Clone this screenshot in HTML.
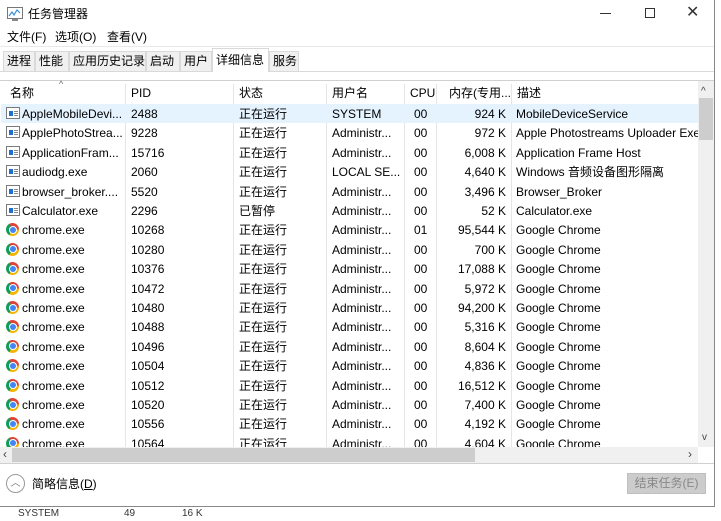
<!DOCTYPE html><html><head><meta charset="utf-8"><style>
*{margin:0;padding:0;box-sizing:border-box}
body{width:721px;height:514px;background:#fff;font-family:"Liberation Sans","Noto Sans CJK SC",sans-serif;font-size:12px;color:#000;position:relative;overflow:hidden;line-height:15px}
.a{position:absolute;white-space:nowrap;line-height:15px}
.tab{position:absolute;top:51px;height:20px;background:#f0f0f0;border:1px solid #d9d9d9;border-bottom:none;padding:2px 0 0 3px;font-size:12px;white-space:nowrap;line-height:15px}
.row{position:absolute;left:1px;width:697px;height:19.4px}
.c{position:absolute;top:3px;white-space:nowrap;overflow:hidden;line-height:15px;height:16px}
.vl{position:absolute;top:84px;height:363px;width:1px;background:#e5e5e5}
.ic{position:absolute;left:5px;top:3px;width:14px;height:12px;border:1px solid #7a7a7a;background:#fff}
.ic:before{content:"";position:absolute;left:2px;top:3px;width:4px;height:5px;background:#1f6fd0}
.ic:after{content:"";position:absolute;left:7px;top:3px;width:4px;height:1px;background:#888;box-shadow:0 2px #888,0 4px #888}
.ch{position:absolute;left:5px;top:3px;width:13px;height:13px;border-radius:50%;background:conic-gradient(from -30deg,#db4437 0 120deg,#f4b400 120deg 240deg,#0f9d58 240deg 360deg)}
.ch:after{content:"";position:absolute;left:3.5px;top:3.5px;width:6px;height:6px;border-radius:50%;background:#4285f4;box-shadow:0 0 0 1px #fff}
</style></head><body>
<div class="a" style="left:0;top:0;width:715px;height:507px;border-right:1px solid #888;border-bottom:1px solid #888"></div>
<svg class="a" style="left:7px;top:7px" width="16" height="14"><rect x="0.5" y="0.5" width="15" height="11" fill="#fff" stroke="#777"/><polyline points="2,9 5,5 7,8 10,3 13,6" fill="none" stroke="#3a8fd8" stroke-width="1.2"/><rect x="5" y="12" width="6" height="2" fill="#888"/></svg>
<div class="a" style="left:28px;top:7px;font-size:12px">任务管理器</div>
<div class="a" style="left:600px;top:13px;width:11px;height:1px;background:#333"></div>
<div class="a" style="left:645px;top:8px;width:10px;height:10px;border:1px solid #333"></div>
<div class="a" style="left:686px;top:5px;font-size:16px;color:#333">✕</div>
<div class="a" style="left:7px;top:30px">文件(F)</div>
<div class="a" style="left:55px;top:30px">选项(O)</div>
<div class="a" style="left:107px;top:30px">查看(V)</div>
<div class="a" style="left:0;top:46px;width:714px;height:1px;background:#e8e8e8"></div>
<div class="a" style="left:0;top:71px;width:714px;height:1px;background:#d9d9d9"></div>
<div class="tab" style="left:3px;width:32px">进程</div>
<div class="tab" style="left:35px;width:34px">性能</div>
<div class="tab" style="left:69px;width:77px">应用历史记录</div>
<div class="tab" style="left:146px;width:34px">启动</div>
<div class="tab" style="left:180px;width:32px">用户</div>
<div class="tab" style="left:212px;width:57px;top:48px;height:24px;background:#fff;padding-top:4px">详细信息</div>
<div class="tab" style="left:269px;width:30px">服务</div>
<div class="a" style="left:0;top:80px;width:714px;height:1px;background:#d0d0d0"></div>
<div class="a" style="left:59px;top:77px;font-size:9px;color:#666">^</div>
<div class="a" style="top:86px;left:10px">名称</div>
<div class="a" style="top:86px;left:131px">PID</div>
<div class="a" style="top:86px;left:239px">状态</div>
<div class="a" style="top:86px;left:332px">用户名</div>
<div class="a" style="top:86px;left:410px">CPU</div>
<div class="a" style="top:86px;left:449px">内存(专用...</div>
<div class="a" style="top:86px;left:517px">描述</div>
<div class="vl" style="left:125px"></div><div class="vl" style="left:233px"></div><div class="vl" style="left:326px"></div><div class="vl" style="left:404px"></div><div class="vl" style="left:436px"></div><div class="vl" style="left:511px"></div>
<div class="a" style="left:1px;top:104px;width:697px;height:19px;background:#e5f3ff"></div>
<div id="rows"></div>
<script>
var R=[["i","AppleMobileDevi...","2488","正在运行","SYSTEM","00","924 K","MobileDeviceService"],
["i","ApplePhotoStrea...","9228","正在运行","Administr...","00","972 K","Apple Photostreams Uploader Exe"],
["i","ApplicationFram...","15716","正在运行","Administr...","00","6,008 K","Application Frame Host"],
["i","audiodg.exe","2060","正在运行","LOCAL SE...","00","4,640 K","Windows 音频设备图形隔离"],
["i","browser_broker....","5520","正在运行","Administr...","00","3,496 K","Browser_Broker"],
["i","Calculator.exe","2296","已暂停","Administr...","00","52 K","Calculator.exe"]];
var ch=[["10268","01","95,544 K"],["10280","00","700 K"],["10376","00","17,088 K"],["10472","00","5,972 K"],["10480","00","94,200 K"],["10488","00","5,316 K"],["10496","00","8,604 K"],["10504","00","4,836 K"],["10512","00","16,512 K"],["10520","00","7,400 K"],["10556","00","4,192 K"],["10564","00","4,604 K"]];
ch.forEach(function(c){R.push(["c","chrome.exe",c[0],"正在运行","Administr...",c[1],c[2],"Google Chrome"])});
var h="";R.forEach(function(r,i){var y=104+i*19.4;if(y>445)return;
h+='<div class="row" style="top:'+y+'px;clip-path:inset(0 0 '+Math.max(0,y+19.4-447)+'px 0)"><div class="'+(r[0]=="i"?"ic":"ch")+'"></div>'+
'<div class="c" style="left:21px;width:103px">'+r[1]+'</div><div class="c" style="left:130px">'+r[2]+'</div><div class="c" style="left:238px">'+r[3]+'</div><div class="c" style="left:331px">'+r[4]+'</div><div class="c" style="left:413px">'+r[5]+'</div><div class="c" style="left:436px;width:69px;text-align:right">'+r[6]+'</div><div class="c" style="left:515px;width:182px">'+r[7]+'</div></div>';});
document.getElementById("rows").innerHTML=h;
</script>
<div class="a" style="left:698px;top:81px;width:16px;height:366px;background:#f0f0f0"></div>
<div class="a" style="left:701px;top:84px;font-size:10px;color:#444">^</div>
<div class="a" style="left:699px;top:98px;width:14px;height:42px;background:#cdcdcd"></div>
<div class="a" style="left:702px;top:430px;font-size:10px;color:#444">v</div>
<div class="a" style="left:0;top:447px;width:698px;height:16px;background:#f0f0f0"></div>
<div class="a" style="left:3px;top:447px;font-size:12px;color:#444">‹</div>
<div class="a" style="left:12px;top:448px;width:463px;height:14px;background:#cdcdcd"></div>
<div class="a" style="left:688px;top:447px;font-size:12px;color:#444">›</div>
<div class="a" style="left:0;top:463px;width:714px;height:1px;background:#d0d0d0"></div>
<div class="a" style="left:6px;top:474px;width:19px;height:19px;border:1px solid #999;border-radius:50%;font-size:10px;color:#777;text-align:center;line-height:17px">︿</div>
<div class="a" style="left:32px;top:477px">简略信息(<u>D</u>)</div>
<div class="a" style="left:627px;top:473px;width:79px;height:21px;background:#ccc;border:1px solid #bfbfbf;color:#888;text-align:center;line-height:19px">结束任务(E)</div>
<div class="a" style="left:18px;top:506px;font-size:10px;color:#333">SYSTEM</div>
<div class="a" style="left:124px;top:506px;font-size:10px;color:#333">49</div>
<div class="a" style="left:182px;top:506px;font-size:10px;color:#333">16 K</div>
</body></html>
